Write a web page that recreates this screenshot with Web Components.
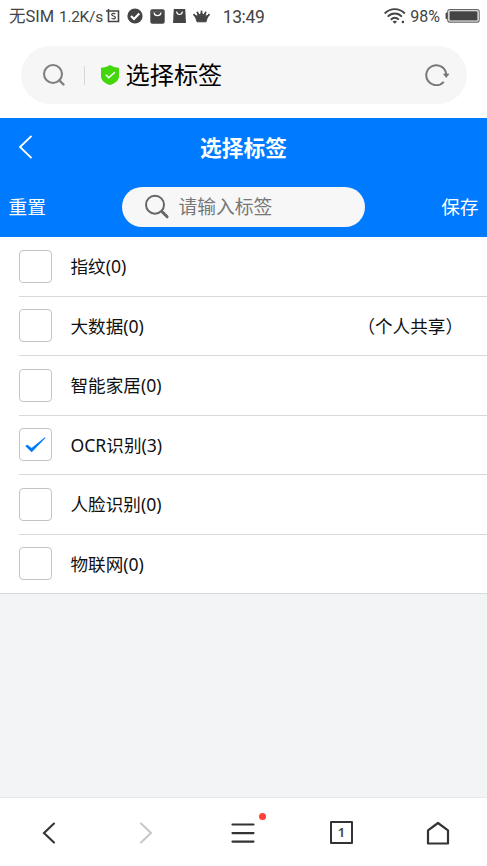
<!DOCTYPE html>
<html lang="zh-CN">
<head>
<meta charset="utf-8">
<title>选择标签</title>
<style>
html,body{margin:0;height:100%}
body{background:#f3f4f6;font-family:"Noto Sans","Noto Sans CJK SC",sans-serif;color:#111;overflow:hidden}
</style>
</head>
<body>
<tag-app></tag-app>
<script>
const ICONS = {
  shot: ['0 0 14 16', '<path d="M2.5 1v12.5H12.5V3H0" fill="none" stroke="#444" stroke-width="1.6"/><path d="M9.3 6.1C8.7 5.2 5.7 5 5.7 6.8c0 1.6 3.7.8 3.7 2.6 0 1.8-3.1 1.7-3.9.6" fill="none" stroke="#444" stroke-width="1.2"/>'],
  ok: ['0 0 16 16', '<circle cx="8" cy="8" r="7.6" fill="#444"/><path d="M4 8l3 3 5.3-5.6" fill="none" stroke="#fff" stroke-width="2.2"/>'],
  bag: ['0 0 15 15', '<rect x=".3" y=".3" width="14.4" height="14.4" rx="2" fill="#444"/><path d="M.5 2.8h14" stroke="#777" stroke-width=".6"/><path d="M4 3.6c.5 4 6.5 4 7 0" fill="none" stroke="#fff" stroke-width="1.2"/>'],
  bag2: ['0 0 13 14', '<path d="M.8 0h11.4l.8 14H0z" fill="#444"/><path d="M3.6 2.5c.3 4 5.5 4 5.8 0" fill="none" stroke="#fff" stroke-width="1.2"/>'],
  crown: ['0 0 17 14', '<path d="M4 12.8L3 9.5 1 5.8l3.8 1.6L4.6 3.6l2.6 2.8L8.5 2.5l1.3 3.9 2.6-2.8-.2 3.8L16 5.800 14 9.500l-1 3.300z" fill="#444" stroke="#444" stroke-width="1" stroke-linejoin="round"/><g fill="#444"><circle cx="1.100" cy="5.700" r="1"/><circle cx="4.400" cy="3.500" r="1"/><circle cx="8.500" cy="2.500" r="1"/><circle cx="12.600" cy="3.500" r="1"/><circle cx="15.900" cy="5.700" r="1"/></g>'],
  wifi: ['0 0 22 16', '<g fill="none" stroke="#444" stroke-width="1.900"><path d="M.7 5.500C6.500-.3 15-.3 20.800 5.500M3.700 8.700c4.200-4.200 10-4.200 14.200 0M6.800 11.700c2.500-2.400 5.600-2.400 8 0"/></g><path d="M8.500 13.500q2.300-1.700 4.600 0l-2.300 2.300z" fill="#444"/><circle cx="18.900" cy="14" r="1.300" fill="#444"/>'],
  battery: ['0 0 35 14', '<rect x="2.700" y=".6" width="31.500" height="12.500" rx="2" fill="#fff" stroke="#666" stroke-width="1.100"/><rect x="4.500" y="2.300" width="28" height="9.200" rx=".5" fill="#444"/><path d="M2 4H1.100v5.600H2z" fill="#444" stroke="#444"/>'],
  search: ['0 0 24 24', '<g fill="none" stroke="#808080" stroke-width="2.100"><circle cx="11" cy="11" r="9"/><path d="M17.300 17.300L21.500 21.500" stroke-width="2.400" stroke-linecap="round"/></g>'],
  find: ['0 0 26 26', '<g fill="none" stroke="#666"><circle cx="11" cy="10.700" r="9" stroke-width="2"/><path d="M17.300 17l1.500 1.500" stroke-width="2"/><path d="M18.600 18.300l4.500 4.500" stroke-width="3" stroke-linecap="round"/></g>'],
  shield: ['0 0 18 20', '<path d="M9 0c2.500 1.700 5.500 2.500 9 2.700v8.500c0 4.600-4.500 7.300-9 8.800-4.500-1.500-9-4.200-9-8.800V2.700C3.500 2.500 6.500 1.700 9 0z" fill="#43d60b"/><path d="M4.800 9.800l3 3 6-5.600" fill="none" stroke="#fff" stroke-width="1.500"/>'],
  reload: ['0 0 24 22', '<path d="M18.800 17.800A10 10 0 1 1 21.200 10" fill="none" stroke="#777" stroke-width="2"/><path d="M18.500 10h5.500L21.200 13.500z" fill="#777" stroke="#777" stroke-width=".7"/>'],
  back: ['0 0 14 24', '<path d="M13.500 1L2 12l11.500 11" fill="none" stroke="#fff" stroke-width="1.800"/>'],
  tick: ['0 0 21 16', '<path d="M.2 9l2.200-1.300 4.200 3.200L19.900.3l.5.600L6.700 15.300z" fill="#007aff"/>'],
  prev: ['0 0 14 22', '<path d="M12 1.500L2 11l10 9.500" fill="none" stroke="#333" stroke-width="2.100" stroke-linecap="round"/>'],
  next: ['0 0 14 22', '<path d="M2 1.500L12 11 2 20.500" fill="none" stroke="#c8c8c8" stroke-width="2.100" stroke-linecap="round"/>'],
  menu: ['0 0 24 22', '<path d="M1.500 2.500h21M1.500 11.100h21M1.500 19.600h21" stroke="#333" stroke-width="2.200" stroke-linecap="round"/>'],
  home: ['0 0 24 24', '<path d="M2 9.300L12 2l10 7.300V22.500H2z" fill="none" stroke="#333" stroke-width="2.200" stroke-linejoin="round"/>']
};
function define(name, html, setup) {
  const t = document.createElement('template');
  t.innerHTML = html;
  customElements.define(name, class extends HTMLElement {
    constructor() { super(); this.attachShadow({mode: 'open'}).append(t.content.cloneNode(true)); }
    connectedCallback() { if (setup) setup(this, this.shadowRoot); }
  });
}

define('app-icon', '<style>:host{display:block;flex:none}span{display:contents}svg{display:block;width:100%;height:100%}</style><span></span>', (el, root) => {
  const [box, body] = ICONS[el.getAttribute('name')];
  root.querySelector('span').innerHTML = `<svg viewBox="${box}">${body}</svg>`;
  const [, , w, h] = box.split(' ');
  el.style.width = w + 'px'; el.style.height = h + 'px';
});

define('status-bar', `<style>
:host{display:flex;height:36px;box-sizing:border-box;padding:0 7px 4px 9px;align-items:center;font:16.500px/32px Roboto,"Noto Sans CJK SC",sans-serif;color:#444;white-space:nowrap}
.sim{width:50px;padding-top:1px}.net{width:47px;font-size:15.500px;letter-spacing:-.3px;padding-top:1px}.time{font-size:17.500px;letter-spacing:-.4px;margin-left:13px;flex:1;padding-top:2px}.pct{font-size:16px;margin:0 5px 0 4px;padding-top:2px}
.icons{display:flex;align-items:center;gap:7.200px}
</style><span class="sim">无SIM</span><span class="net">1.2K/s</span>
<div class="icons"><app-icon name="shot"></app-icon><app-icon name="ok"></app-icon><app-icon name="bag"></app-icon><app-icon name="bag2"></app-icon><app-icon name="crown"></app-icon></div>
<span class="time">13:49</span><app-icon name="wifi"></app-icon><span class="pct">98%</span><app-icon name="battery"></app-icon>`);

define('address-bar', `<style>
:host{display:block;padding:10px 20px 14px 20.500px}
.pill{display:flex;align-items:center;height:58px;border-radius:29px;background:#f6f6f6;padding:0 18px 0 21px}
.sep{width:1px;height:19px;background:#d6d6d6;margin:0 16px 0 18px}
.title{flex:1;margin-left:7px;font:24.200px/56px "Noto Sans CJK SC",sans-serif;height:58px;color:#000}
</style><div class="pill"><app-icon name="search"></app-icon><i class="sep"></i><app-icon name="shield"></app-icon><span class="title"><slot></slot></span><app-icon name="reload"></app-icon></div>`);

define('page-header', `<style>
:host{display:block;height:119px;background:#007aff;color:#fff;font-family:"Noto Sans CJK SC",sans-serif}
.top{display:grid;grid-template-columns:60px 1fr 60px;align-items:center;height:59px}
.top app-icon{margin:0 0 1px 18px}
h1{margin:0;text-align:center;font-size:21.700px;line-height:57px;height:59px;font-weight:700}
.bar{display:flex;justify-content:space-between;align-items:center;height:60px;padding:0 8.500px;font-size:18.700px}
.bar span{padding-bottom:3px}
.find{display:flex;align-items:center;width:243px;height:40px;box-sizing:border-box;border-radius:20px;background:#f7f7f7;padding-left:22px;color:#777;gap:8.500px;font-size:18.800px}
</style><div class="top"><app-icon name="back"></app-icon><h1><slot></slot></h1></div>
<div class="bar"><span>重置</span><div class="find"><app-icon name="find"></app-icon><span>请输入标签</span></div><span>保存</span></div>`);

define('tag-row', `<style>
:host{display:flex;align-items:center;height:59.500px;box-sizing:border-box;margin-left:19px;border-bottom:1px solid #d9d9d9;font-size:17.600px}
:host(:last-child){margin-left:0;padding-left:19px}
.box{display:flex;align-items:center;justify-content:center;width:32.500px;height:33px;box-sizing:border-box;border:1px solid #c4c4c4;border-radius:4px;margin-right:19px}
.box app-icon{display:none}
:host([checked]) .box app-icon{display:block}
.label{flex:1;line-height:26px}
.note{margin-right:24px}
</style><div class="box"><app-icon name="tick"></app-icon></div><span class="label"><slot></slot></span><span class="note"><slot name="note"></slot></span>`);

define('tag-list', '<style>:host{display:block;background:#fff}</style><slot></slot>');

define('browser-nav', `<style>
:host{display:grid;grid-template-columns:repeat(5,1fr);place-items:center;height:69px;box-sizing:border-box;border-top:1px solid #e8e8e8;background:#fff;padding:1px 0 0}
.menu{position:relative}
.dot{position:absolute;left:27.500px;top:-9px;width:7px;height:7px;border-radius:50%;background:#ff4038}
.tabs{width:23px;height:23px;box-sizing:border-box;border:2px solid #333;border-radius:1px;text-align:center;font:600 13px/18px "Noto Sans",sans-serif;color:#444;margin-left:1px}
</style><app-icon name="prev"></app-icon><app-icon name="next"></app-icon><div class="menu"><app-icon name="menu"></app-icon><i class="dot"></i></div><div class="tabs">1</div><app-icon name="home"></app-icon>`);

define('tag-app', `<style>
:host{display:flex;flex-direction:column;height:866px;width:487px}
.chrome{background:#fff}
.space{flex:1}
</style><div class="chrome"><status-bar></status-bar><address-bar>选择标签</address-bar></div>
<page-header>选择标签</page-header>
<tag-list>
<tag-row>指纹(0)</tag-row>
<tag-row>大数据(0)<span slot="note">（个人共享）</span></tag-row>
<tag-row>智能家居(0)</tag-row>
<tag-row checked>OCR识别(3)</tag-row>
<tag-row>人脸识别(0)</tag-row>
<tag-row>物联网(0)</tag-row>
</tag-list>
<div class="space"></div><browser-nav></browser-nav>`);
</script>
</body>
</html>
